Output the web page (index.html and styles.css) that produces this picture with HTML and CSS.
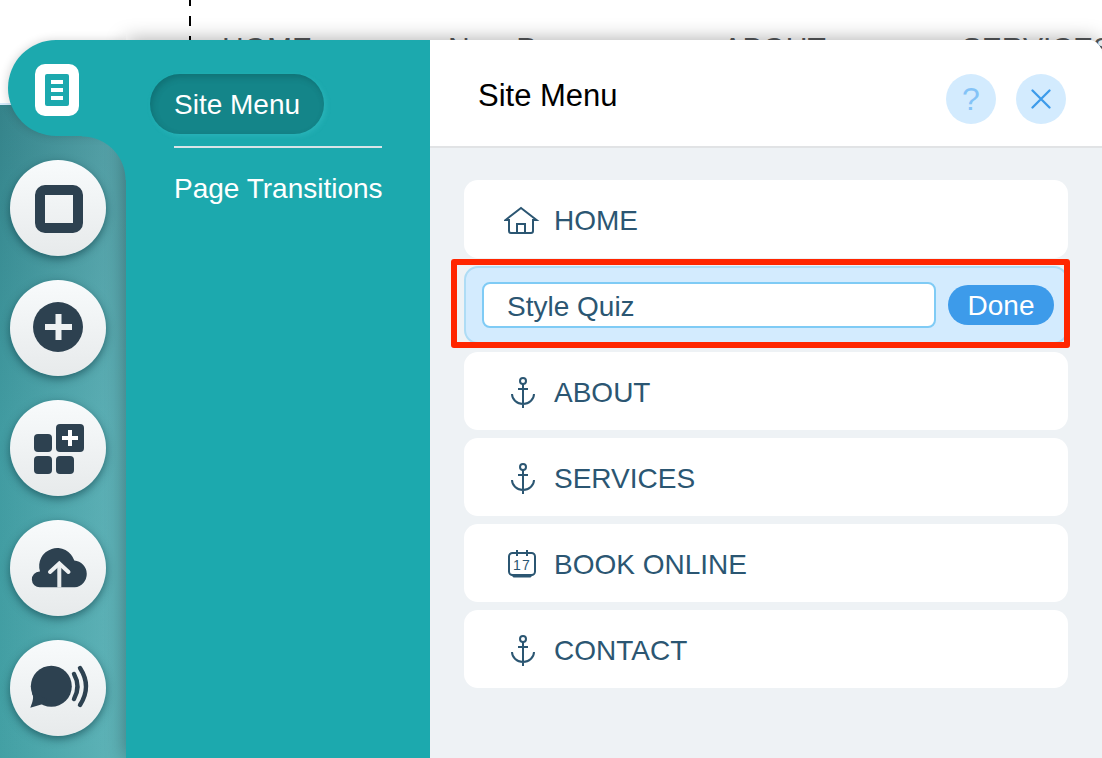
FILE: index.html
```html
<!DOCTYPE html>
<html lang="en">
<head>
<meta charset="utf-8">
<meta name="viewport" content="width=device-width, initial-scale=1">
<title>Site Menu</title>
<link rel="stylesheet" href="styles.css">
</head>
<body>
<svg class="defs" aria-hidden="true">
  <symbol id="anchor" viewBox="0 0 36 36">
    <g fill="none" stroke="currentColor" stroke-width="2">
      <circle cx="19" cy="8" r="3"/>
      <path d="M19 11V35M14 16h10M8 21a11 10 0 0 0 22 0"/>
    </g>
  </symbol>
</svg>
<div class="editor">
  <div class="site">
    <div class="site-header">
      <div class="site-nav">
        <span>HOME</span><span>New Page</span><span>ABOUT</span><span>SERVICES</span>
      </div>
      <div class="guide"></div>
    </div>
    <div class="site-hero"></div>
  </div>

  <div class="workspace">
    <nav class="rail" aria-label="Editor tools">
      <button class="tab" aria-label="Menus and pages">
        <svg width="96" height="96" viewBox="0 0 96 96">
          <rect x="27" y="24" width="44" height="52" rx="10" fill="#fff"/>
          <rect x="37" y="34" width="24" height="32" rx="2" fill="#1ca9ae"/>
          <path d="M43 42h12M43 50h12M43 58h12" stroke="#fff" stroke-width="4"/>
        </svg>
      </button>
      <button class="tool" aria-label="Background">
        <svg viewBox="0 0 96 96"><path fill-rule="evenodd" fill="currentColor" d="M35 25h28a10 10 0 0 1 10 10v28a10 10 0 0 1-10 10H35a10 10 0 0 1-10-10V35a10 10 0 0 1 10-10zM35 35v28h28V35z"/></svg>
      </button>
      <button class="tool" aria-label="Add">
        <svg viewBox="0 0 96 96"><circle cx="48" cy="47" r="25" fill="currentColor"/><path d="M35 47h27M48.500 34v26" stroke="#eef1f2" stroke-width="6"/></svg>
      </button>
      <button class="tool" aria-label="Apps">
        <svg viewBox="0 0 96 96"><g fill="currentColor"><rect x="24" y="34" width="18" height="18" rx="4"/><rect x="24" y="56" width="18" height="18" rx="4"/><rect x="46" y="56" width="18" height="18" rx="4"/><rect x="46" y="24" width="28" height="28" rx="4"/></g><path d="M52 38h16M60 30v16" stroke="#fff" stroke-width="4"/></svg>
      </button>
      <button class="tool" aria-label="Uploads">
        <svg viewBox="0 0 96 96"><path fill="currentColor" d="M30 67.300a7.900 7.900 0 0 1-0.500-15.800L30 51.500A17.700 17.700 0 1 1 64.300 40.600a13.400 13.400 0 0 1 0.400 26.700z"/><path d="M49.300 67.500V44" stroke="#e7ebec" stroke-width="4"/><path d="M40 52l9.300-8.500L58.500 52" fill="none" stroke="#eef1f2" stroke-width="4" stroke-linecap="round"/></svg>
      </button>
      <button class="tool" aria-label="Blog">
        <svg viewBox="0 0 96 96"><circle cx="41.300" cy="46.300" r="20.500" fill="currentColor"/><path d="M22 53c2 4 1 8-1.700 14.700L33 64l4-5z" fill="currentColor"/><path d="M64 34q7 12.500 0 25M70 28q12 18.500 0 37" fill="none" stroke="currentColor" stroke-width="4.400" stroke-linecap="round"/></svg>
      </button>
    </nav>

    <div class="dock">
      <nav class="submenu" aria-label="Menu sections">
        <a class="sub-link current" href="#menu" aria-current="page">Site Menu</a>
        <hr class="divider">
        <a class="sub-link" href="#transitions">Page Transitions</a>
      </nav>

      <main class="panel">
        <header class="panel-header">
          <h1 class="panel-title">Site Menu</h1>
          <div class="actions">
            <button class="round help" aria-label="Help">?</button>
            <button class="round" aria-label="Close"><svg width="20" height="20" viewBox="0 0 20 20"><path d="M1.500 1.500l17 17M18.500 1.500l-17 17" stroke="currentColor" stroke-width="2.300" stroke-linecap="round"/></svg></button>
          </div>
        </header>
        <ul class="pages">
          <li class="page"><svg class="icon" viewBox="0 0 36 36"><path d="M1.500 19H5v11a2 2 0 0 0 2 2h20a2 2 0 0 0 2-2V19h3.500L17 7zM13 32V23h8v9" fill="none" stroke="currentColor" stroke-width="2"/></svg>HOME</li>
          <li class="page editing">
            <input class="name" type="text" value="Style Quiz" aria-label="Page name">
            <button class="done">Done</button>
          </li>
          <li class="page"><svg class="icon"><use href="#anchor"/></svg>ABOUT</li>
          <li class="page"><svg class="icon"><use href="#anchor"/></svg>SERVICES</li>
          <li class="page"><svg class="icon" viewBox="0 0 36 36"><rect x="5" y="8" width="26" height="22" rx="3.500" fill="none" stroke="currentColor" stroke-width="2"/><path d="M13 5v6M23 5v6" stroke="currentColor" stroke-width="2"/><path d="M6 29h24l-3.500 3.500h-17z" fill="currentColor"/><text class="date" x="9 18" y="25">17</text></svg>BOOK ONLINE</li>
          <li class="page"><svg class="icon"><use href="#anchor"/></svg>CONTACT</li>
        </ul>
      </main>
    </div>
  </div>
</div>
</body>
</html>
```
FILE: styles.css
```css
* { box-sizing: border-box; }
body {
  margin: 0;
  background: #fff;
  color: #2b5672;
  font: 28px/36px "Liberation Sans", Arial, sans-serif;
}
button, input { font: inherit; margin: 0; }
button { border: 0; padding: 0; cursor: pointer; }
.defs { position: absolute; width: 0; height: 0; }

/* The edited site and the editor chrome share one grid cell. */
.editor { display: grid; grid-template-columns: minmax(0, 1fr); min-height: 100vh; }
.site, .workspace { grid-area: 1 / 1; min-width: 0; }

.site { display: flex; flex-direction: column; overflow: hidden; }
.site-header {
  position: relative;
  height: 105px;
  padding: 33px 0 0 222px;
  border-bottom: 2px solid #d5eafa;
}
.site-nav {
  display: flex;
  gap: 136px;
  color: #55585a;
  font-size: 30px;
  line-height: 30px;
  white-space: nowrap;
}
.guide {
  position: absolute;
  top: 0;
  bottom: 0;
  left: 189px;
  width: 2px;
  background: repeating-linear-gradient(#000 0 6px, transparent 6px 16px, #000 16px 20px);
}
.site-hero {
  flex: 1;
  background:
    linear-gradient(to right, transparent, rgba(160, 225, 230, .28) 110px),
    linear-gradient(#35838a, #419ba1 50%, #43a0a4);
}

.workspace { position: relative; display: flex; padding-top: 40px; }

.rail {
  position: relative;
  z-index: 1;
  flex: none;
  width: 126px;
  display: flex;
  flex-direction: column;
  gap: 24px;
  padding: 0 0 22px 10px;
}
.tab {
  position: relative;
  height: 96px;
  margin-left: -2px;
  border-radius: 48px 0 0 48px;
  background: #1ca9ae;
  box-shadow: -1px 0 10px rgba(0, 0, 0, .16);
  clip-path: inset(-20px 0 -44px -20px);
  text-align: left;
}
.tab svg { display: block; }
.tab::after {
  content: "";
  position: absolute;
  top: 100%;
  right: 0;
  width: 44px;
  height: 44px;
  background: radial-gradient(circle at 0 100%, transparent 43px, #1ca9ae 44px);
}
.tool {
  width: 96px;
  height: 96px;
  border-radius: 50%;
  background: linear-gradient(#f8fbfc, #e7eaeb);
  box-shadow: 0 3px 8px rgba(0, 40, 50, .5);
  color: #2d4150;
}
.tool svg { display: block; }

.dock {
  flex: 1;
  min-width: 0;
  display: flex;
  border-radius: 0 14px 0 0;
  box-shadow: 0 0 20px rgba(0, 0, 0, .34);
}
.submenu {
  flex: none;
  width: 304px;
  display: flex;
  flex-direction: column;
  align-items: flex-start;
  padding: 34px 24px;
  background: #1ca9ae;
}
.sub-link {
  padding: 13px 24px 11px;
  border-radius: 30px;
  color: #fff;
  text-decoration: none;
  white-space: nowrap;
}
.current {
  background: #148589;
  box-shadow: inset 2px 3px 6px rgba(0, 50, 55, .24), 2px 2px 5px rgba(70, 205, 210, .3);
}
.divider {
  align-self: stretch;
  height: 2px;
  margin: 12px 24px 10px;
  border: 0;
  background: #d9e4e8;
}

.panel {
  flex: 1;
  min-width: 0;
  border-radius: 0 14px 0 0;
  background: #eef2f5;
}
.panel-header {
  display: flex;
  justify-content: space-between;
  align-items: flex-start;
  padding: 34px 36px 22px 48px;
  border-bottom: 2px solid #e1e3e5;
  border-radius: 0 14px 0 0;
  background: #fff;
}
.panel-title {
  margin: 0;
  color: #000;
  font-size: 31px;
  font-weight: 300;
  line-height: 44px;
}
.actions { display: flex; gap: 20px; }
.round {
  display: flex;
  align-items: center;
  justify-content: center;
  width: 50px;
  height: 50px;
  border-radius: 50%;
  background: #d3ebfe;
  color: #3d9bea;
}
.help {
  color: #84c3f7;
  font-size: 32px;
}

.pages {
  display: flex;
  flex-direction: column;
  gap: 8px;
  margin: 0;
  padding: 32px 34px;
  list-style: none;
}
.page {
  display: flex;
  align-items: center;
  gap: 14px;
  height: 78px;
  padding: 4px 40px 0 39px;
  border-radius: 14px;
  background: #fff;
}
.icon { flex: none; width: 36px; height: 36px; margin: 0 0 4px 1px; }
.date { fill: currentColor; font-size: 14px; }
.editing {
  position: relative;
  gap: 12px;
  padding: 0 12px 0 16px;
  border: 2px solid #aedcf5;
  background: #d3ebfe;
}
.editing::after {
  content: "";
  position: absolute;
  inset: -9px -4px -6px -15px;
  border: 6px solid #ff2600;
  border-radius: 3px;
  pointer-events: none;
}
.name {
  flex: 1;
  min-width: 0;
  height: 46px;
  padding: 4px 23px 0;
  border: 2px solid #7fcbf5;
  border-radius: 8px;
  outline: 0;
  background: #fff;
  color: inherit;
}
.done {
  width: 106px;
  height: 40px;
  padding: 2px 0 0;
  border-radius: 20px;
  background: #3d9bea;
  color: #fff;
}
```
